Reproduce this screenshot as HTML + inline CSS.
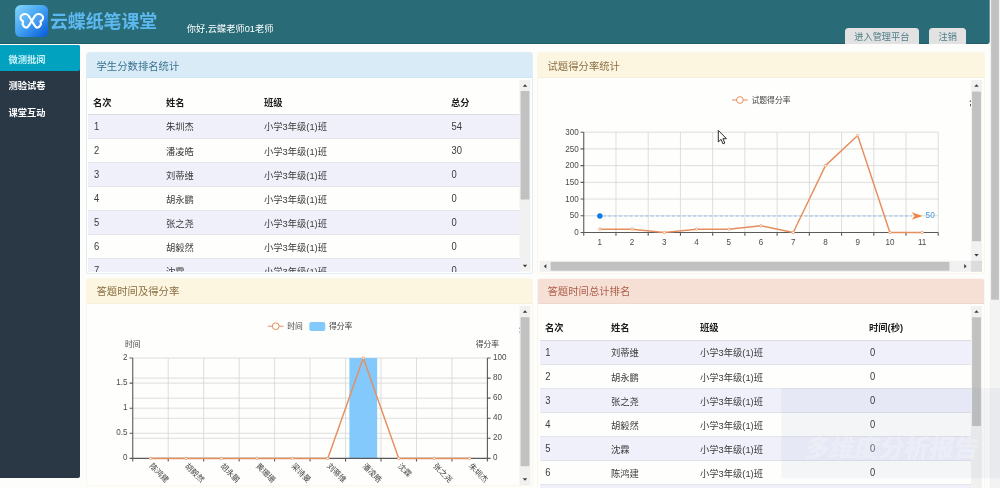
<!DOCTYPE html>
<html lang="zh-CN"><head><meta charset="utf-8"><title>云蝶纸笔课堂</title><style>
*{box-sizing:border-box}
html,body{margin:0;padding:0}
html{width:1000px;height:488px;overflow:hidden;background:#fdfdfc}
body{width:1000px;height:488px;overflow:hidden;position:relative;background:#fdfdfc;
 font-family:"Liberation Sans",sans-serif;font-size:9.3px;color:#3a3a3a}
.vh{position:absolute;width:1px;height:1px;overflow:hidden;clip:rect(0 0 0 0);clip-path:inset(50%);white-space:nowrap;font-size:1px}
.L{position:absolute;display:block;line-height:0;margin:0}
.L svg,.F svg{display:block;overflow:visible}
.F{display:block;line-height:0;position:relative}
.ov{position:absolute;left:0;top:0;pointer-events:none;font-family:"Liberation Sans",sans-serif}
.hd{position:absolute;left:0;top:0;width:990px;height:43.6px;background:#296c77;border-bottom:1.4px solid #225c66;border-bottom-right-radius:3.5px;margin:0}
.logo{position:absolute;left:12px;top:3px}
.btn{position:absolute;top:28.3px;height:16px;background:#e2e2e2;border-radius:3.5px 3.5px 0 0;border:0;padding:0;margin:0;display:block;font:inherit;overflow:visible}
.sb{position:absolute;left:0;top:44.6px;width:79.7px;height:433.7px;background:#2a3745;border-radius:0 2.5px 2px 0}
.sb .it{position:absolute;left:0;width:79.7px;height:26.7px;display:block}
.sb .act{background:#00a2bf;border-radius:0 2px 2px 0}
.pn{position:absolute;border:.8px solid #ddd;border-radius:2.6px;background:#fefefd;overflow:hidden;margin:0}
.ph{margin:0;height:25.3px;width:100%}
.info{border-color:#dcedf6}.info .ph{background:#d8ebf6;border-bottom:.7px solid #cfe6f1}
.warn{border-color:#fbf6e8}.warn .ph{background:#fcf6e1;border-bottom:.7px solid #f8efd9}
.danger{border-color:#fcf4f1}.danger .ph{background:#f6e0d6;border-bottom:.7px solid #f1d6d0}
.p4{border-bottom:0;border-bottom-left-radius:0;border-bottom-right-radius:0}
.soft,.L svg,.F svg,.n{filter:blur(.42px)}
.clip{position:absolute;overflow:hidden}
.tb{position:absolute;border-collapse:separate;border-spacing:0;table-layout:fixed;margin:0}
.tb th,.tb td{padding:0;text-align:left;vertical-align:middle;font-weight:normal}
.tb th{height:24.1px;border-bottom:1.3px solid #dcdce2}
.tb td{height:24.09px;border-bottom:.7px solid #e3e3ea}
.tb tbody tr:nth-child(odd) td{background:#f0f0fb}
.tb tbody tr:nth-child(even) td{background:#fefefc}
.n{display:block;line-height:12px;font-size:9.4px;color:#3a3a3a;transform:scaleY(1.17);transform-origin:0 55%;position:relative;top:.25px;left:.6px}
.t{font-family:"Liberation Sans","Noto Sans CJK SC",sans-serif}
.tbd{font-family:"Liberation Sans","Noto Sans CJK SC",sans-serif;font-weight:bold}
</style></head>
<body>
<section class="pn info" style="left:86px;top:52px;width:447px;height:222px"><h3 class="ph" style="height:25.4px"></h3></section><span class="L pt" style="left:95px;top:58px;width:87px;height:16px"><svg width="87" height="16" viewBox="0 0 87 16" aria-hidden="true"><text class="t" x="1.5" y="11.58" font-size="10.35" fill="#3b7391">学生分数排名统计</text></svg><span class="vh">学生分数排名统计</span></span><div class="clip" style="left:88px;top:80px;width:431.5px;height:191.5px"><table class="tb" style="left:0px;top:10.8px;width:431.5px"><colgroup><col style="width:73.3px"><col style="width:97.5px"><col style="width:186.9px"><col style="width:73.8px"></colgroup><thead><tr><th style="padding-left:5.4px"><span class="F"><svg width="20" height="12" viewBox="0 0 20 12" aria-hidden="true"><text class="tbd" x="0" y="10.05" font-size="9.3" fill="#1c1c1c">名次</text></svg><span class="vh">名次</span></span></th><th style="padding-left:5.2px"><span class="F"><svg width="20" height="12" viewBox="0 0 20 12" aria-hidden="true"><text class="tbd" x="0" y="10.05" font-size="9.3" fill="#1c1c1c">姓名</text></svg><span class="vh">姓名</span></span></th><th style="padding-left:5.2px"><span class="F"><svg width="20" height="12" viewBox="0 0 20 12" aria-hidden="true"><text class="tbd" x="0" y="10.05" font-size="9.3" fill="#1c1c1c">班级</text></svg><span class="vh">班级</span></span></th><th style="padding-left:5.2px"><span class="F"><svg width="20" height="12" viewBox="0 0 20 12" aria-hidden="true"><text class="tbd" x="0" y="10.05" font-size="9.3" fill="#1c1c1c">总分</text></svg><span class="vh">总分</span></span></th></tr></thead><tbody><tr><td style="padding-left:5.4px"><span class="n">1</span></td><td style="padding-left:5.2px"><span class="F"><svg width="29" height="12" viewBox="0 0 29 12" aria-hidden="true"><text class="t" x="0" y="10.05" font-size="9.3" fill="#3a3a3a">朱圳杰</text></svg><span class="vh">朱圳杰</span></span></td><td style="padding-left:5.2px"><span class="F"><svg width="65" height="12" viewBox="0 0 65 12" aria-hidden="true"><text class="t" x="0" y="10.05" font-size="9.3" fill="#3a3a3a">小学3年级(1)班</text></svg><span class="vh">小学3年级(1)班</span></span></td><td style="padding-left:5.2px"><span class="n">54</span></td></tr><tr><td style="padding-left:5.4px"><span class="n">2</span></td><td style="padding-left:5.2px"><span class="F"><svg width="29" height="12" viewBox="0 0 29 12" aria-hidden="true"><text class="t" x="0" y="10.05" font-size="9.3" fill="#3a3a3a">潘凌皓</text></svg><span class="vh">潘凌皓</span></span></td><td style="padding-left:5.2px"><span class="F"><svg width="65" height="12" viewBox="0 0 65 12" aria-hidden="true"><text class="t" x="0" y="10.05" font-size="9.3" fill="#3a3a3a">小学3年级(1)班</text></svg><span class="vh">小学3年级(1)班</span></span></td><td style="padding-left:5.2px"><span class="n">30</span></td></tr><tr><td style="padding-left:5.4px"><span class="n">3</span></td><td style="padding-left:5.2px"><span class="F"><svg width="29" height="12" viewBox="0 0 29 12" aria-hidden="true"><text class="t" x="0" y="10.05" font-size="9.3" fill="#3a3a3a">刘蒂维</text></svg><span class="vh">刘蒂维</span></span></td><td style="padding-left:5.2px"><span class="F"><svg width="65" height="12" viewBox="0 0 65 12" aria-hidden="true"><text class="t" x="0" y="10.05" font-size="9.3" fill="#3a3a3a">小学3年级(1)班</text></svg><span class="vh">小学3年级(1)班</span></span></td><td style="padding-left:5.2px"><span class="n">0</span></td></tr><tr><td style="padding-left:5.4px"><span class="n">4</span></td><td style="padding-left:5.2px"><span class="F"><svg width="29" height="12" viewBox="0 0 29 12" aria-hidden="true"><text class="t" x="0" y="10.05" font-size="9.3" fill="#3a3a3a">胡永鹏</text></svg><span class="vh">胡永鹏</span></span></td><td style="padding-left:5.2px"><span class="F"><svg width="65" height="12" viewBox="0 0 65 12" aria-hidden="true"><text class="t" x="0" y="10.05" font-size="9.3" fill="#3a3a3a">小学3年级(1)班</text></svg><span class="vh">小学3年级(1)班</span></span></td><td style="padding-left:5.2px"><span class="n">0</span></td></tr><tr><td style="padding-left:5.4px"><span class="n">5</span></td><td style="padding-left:5.2px"><span class="F"><svg width="29" height="12" viewBox="0 0 29 12" aria-hidden="true"><text class="t" x="0" y="10.05" font-size="9.3" fill="#3a3a3a">张之尧</text></svg><span class="vh">张之尧</span></span></td><td style="padding-left:5.2px"><span class="F"><svg width="65" height="12" viewBox="0 0 65 12" aria-hidden="true"><text class="t" x="0" y="10.05" font-size="9.3" fill="#3a3a3a">小学3年级(1)班</text></svg><span class="vh">小学3年级(1)班</span></span></td><td style="padding-left:5.2px"><span class="n">0</span></td></tr><tr><td style="padding-left:5.4px"><span class="n">6</span></td><td style="padding-left:5.2px"><span class="F"><svg width="29" height="12" viewBox="0 0 29 12" aria-hidden="true"><text class="t" x="0" y="10.05" font-size="9.3" fill="#3a3a3a">胡毅然</text></svg><span class="vh">胡毅然</span></span></td><td style="padding-left:5.2px"><span class="F"><svg width="65" height="12" viewBox="0 0 65 12" aria-hidden="true"><text class="t" x="0" y="10.05" font-size="9.3" fill="#3a3a3a">小学3年级(1)班</text></svg><span class="vh">小学3年级(1)班</span></span></td><td style="padding-left:5.2px"><span class="n">0</span></td></tr><tr><td style="padding-left:5.4px"><span class="n">7</span></td><td style="padding-left:5.2px"><span class="F"><svg width="20" height="12" viewBox="0 0 20 12" aria-hidden="true"><text class="t" x="0" y="10.05" font-size="9.3" fill="#3a3a3a">沈霖</text></svg><span class="vh">沈霖</span></span></td><td style="padding-left:5.2px"><span class="F"><svg width="65" height="12" viewBox="0 0 65 12" aria-hidden="true"><text class="t" x="0" y="10.05" font-size="9.3" fill="#3a3a3a">小学3年级(1)班</text></svg><span class="vh">小学3年级(1)班</span></span></td><td style="padding-left:5.2px"><span class="n">0</span></td></tr><tr><td style="padding-left:5.4px"><span class="n">8</span></td><td style="padding-left:5.2px"><span class="F"><svg width="29" height="12" viewBox="0 0 29 12" aria-hidden="true"><text class="t" x="0" y="10.05" font-size="9.3" fill="#3a3a3a">陈鸿建</text></svg><span class="vh">陈鸿建</span></span></td><td style="padding-left:5.2px"><span class="F"><svg width="65" height="12" viewBox="0 0 65 12" aria-hidden="true"><text class="t" x="0" y="10.05" font-size="9.3" fill="#3a3a3a">小学3年级(1)班</text></svg><span class="vh">小学3年级(1)班</span></span></td><td style="padding-left:5.2px"><span class="n">0</span></td></tr></tbody></table></div><svg class="ov" width="1000" height="488" viewBox="0 0 1000 488"><rect x="519.5" y="80" width="11" height="191.5" fill="#f1f1f1"/><rect x="520.6" y="91" width="8.8" height="108.5" fill="#c1c1c1"/><polygon points="522.75,86.84 527.25,86.84 525,84.36" fill="#3c3c3c"/><polygon points="522.75,264.66 527.25,264.66 525,267.14" fill="#3c3c3c"/></svg><section class="pn warn" style="left:537px;top:52px;width:447.5px;height:221.5px"><h3 class="ph" style="height:25.4px"></h3></section><span class="L pt" style="left:546px;top:58px;width:76px;height:16px"><svg width="76" height="16" viewBox="0 0 76 16" aria-hidden="true"><text class="t" x="1.5" y="11.58" font-size="10.35" fill="#8b6f43">试题得分率统计</text></svg><span class="vh">试题得分率统计</span></span><svg class="ov soft" width="1000" height="488" viewBox="0 0 1000 488" role="img" aria-label="试题得分率统计"><path d="M615.98 132.2V232.5M648.2 132.2V232.5M680.43 132.2V232.5M712.66 132.2V232.5M744.89 132.2V232.5M777.11 132.2V232.5M809.34 132.2V232.5M841.57 132.2V232.5M873.8 132.2V232.5M906.02 132.2V232.5M938.25 132.2V232.5M583.75 215.78H938.25M583.75 199.07H938.25M583.75 182.35H938.25M583.75 165.63H938.25M583.75 148.92H938.25M583.75 132.2H938.25" stroke="#d6d6d6" stroke-width=".8" fill="none"/><path d="M583.75 132.2V232.5M583.75 232.5H938.25M580.55 232.5H583.75M580.55 215.78H583.75M580.55 199.07H583.75M580.55 182.35H583.75M580.55 165.63H583.75M580.55 148.92H583.75M580.55 132.2H583.75M583.75 232.5V235.7M615.98 232.5V235.7M648.2 232.5V235.7M680.43 232.5V235.7M712.66 232.5V235.7M744.89 232.5V235.7M777.11 232.5V235.7M809.34 232.5V235.7M841.57 232.5V235.7M873.8 232.5V235.7M906.02 232.5V235.7M938.25 232.5V235.7" stroke="#5a5a5a" stroke-width="1.1" fill="none"/><text transform="translate(578.65 235.15) scale(1 1.2)" text-anchor="end" fill="#4a4a4a" font-size="8.1">0</text><text transform="translate(578.65 218.43) scale(1 1.2)" text-anchor="end" fill="#4a4a4a" font-size="8.1">50</text><text transform="translate(578.65 201.72) scale(1 1.2)" text-anchor="end" fill="#4a4a4a" font-size="8.1">100</text><text transform="translate(578.65 185) scale(1 1.2)" text-anchor="end" fill="#4a4a4a" font-size="8.1">150</text><text transform="translate(578.65 168.28) scale(1 1.2)" text-anchor="end" fill="#4a4a4a" font-size="8.1">200</text><text transform="translate(578.65 151.57) scale(1 1.2)" text-anchor="end" fill="#4a4a4a" font-size="8.1">250</text><text transform="translate(578.65 134.85) scale(1 1.2)" text-anchor="end" fill="#4a4a4a" font-size="8.1">300</text><text transform="translate(599.86 244.85) scale(1 1.2)" text-anchor="middle" fill="#4a4a4a" font-size="8.1">1</text><text transform="translate(632.09 244.85) scale(1 1.2)" text-anchor="middle" fill="#4a4a4a" font-size="8.1">2</text><text transform="translate(664.32 244.85) scale(1 1.2)" text-anchor="middle" fill="#4a4a4a" font-size="8.1">3</text><text transform="translate(696.55 244.85) scale(1 1.2)" text-anchor="middle" fill="#4a4a4a" font-size="8.1">4</text><text transform="translate(728.77 244.85) scale(1 1.2)" text-anchor="middle" fill="#4a4a4a" font-size="8.1">5</text><text transform="translate(761 244.85) scale(1 1.2)" text-anchor="middle" fill="#4a4a4a" font-size="8.1">6</text><text transform="translate(793.23 244.85) scale(1 1.2)" text-anchor="middle" fill="#4a4a4a" font-size="8.1">7</text><text transform="translate(825.45 244.85) scale(1 1.2)" text-anchor="middle" fill="#4a4a4a" font-size="8.1">8</text><text transform="translate(857.68 244.85) scale(1 1.2)" text-anchor="middle" fill="#4a4a4a" font-size="8.1">9</text><text transform="translate(889.91 244.85) scale(1 1.2)" text-anchor="middle" fill="#4a4a4a" font-size="8.1">10</text><text transform="translate(922.14 244.85) scale(1 1.2)" text-anchor="middle" fill="#4a4a4a" font-size="8.1">11</text><path d="M603 216H912" stroke="#8dbfee" stroke-width="1.15" stroke-dasharray="3.1 2.2" fill="none"/><circle cx="599.86" cy="216" r="2.7" fill="#0f7ae6"/><path d="M922.6 216L911.6 212.2L914.8 216L911.6 219.8Z" fill="#ef8648"/><text transform="translate(925.6 218.44) scale(1 1.2)" text-anchor="start" fill="#4b9be6" font-size="8.3">50</text><polyline points="599.86,229.16 632.09,229.16 664.32,232.5 696.55,229.16 728.77,229.16 761,225.81 793.23,232.5 825.45,165.63 857.68,135.54 889.91,232.5 922.14,232.5" fill="none" stroke="#e58f5f" stroke-width="1.45" stroke-linejoin="round"/><circle cx="599.86" cy="229.16" r="1.25" fill="#fff" stroke="#e58f5f" stroke-width=".7"/><circle cx="632.09" cy="229.16" r="1.25" fill="#fff" stroke="#e58f5f" stroke-width=".7"/><circle cx="664.32" cy="232.5" r="1.25" fill="#fff" stroke="#e58f5f" stroke-width=".7"/><circle cx="696.55" cy="229.16" r="1.25" fill="#fff" stroke="#e58f5f" stroke-width=".7"/><circle cx="728.77" cy="229.16" r="1.25" fill="#fff" stroke="#e58f5f" stroke-width=".7"/><circle cx="761" cy="225.81" r="1.25" fill="#fff" stroke="#e58f5f" stroke-width=".7"/><circle cx="793.23" cy="232.5" r="1.25" fill="#fff" stroke="#e58f5f" stroke-width=".7"/><circle cx="825.45" cy="165.63" r="1.25" fill="#fff" stroke="#e58f5f" stroke-width=".7"/><circle cx="857.68" cy="135.54" r="1.25" fill="#fff" stroke="#e58f5f" stroke-width=".7"/><circle cx="889.91" cy="232.5" r="1.25" fill="#fff" stroke="#e58f5f" stroke-width=".7"/><circle cx="922.14" cy="232.5" r="1.25" fill="#fff" stroke="#e58f5f" stroke-width=".7"/><path d="M732 100H747.8" stroke="#e58f5f" stroke-width="1"/><circle cx="739.9" cy="100" r="3.4" fill="#fdfdfc" stroke="#e58f5f" stroke-width="1"/><text class="t" x="751.4" y="102.73" font-size="7.85" fill="#444">试题得分率</text><path d="M970.3 100.4v1.6M970.6 104v2.2" stroke="#555" stroke-width="1.1"/><rect x="971" y="80" width="11" height="180.8" fill="#f1f1f1"/><rect x="972.1" y="91.6" width="8.8" height="149.6" fill="#c1c1c1"/><polygon points="974.25,86.84 978.75,86.84 976.5,84.36" fill="#3c3c3c"/><polygon points="974.25,253.96 978.75,253.96 976.5,256.44" fill="#3c3c3c"/><rect x="539.5" y="260.8" width="431.5" height="11" fill="#f1f1f1"/><rect x="550.6" y="261.9" width="398.8" height="8.8" fill="#c1c1c1"/><polygon points="546.34,264.05 546.34,268.55 543.86,266.3" fill="#3c3c3c"/><polygon points="964.16,264.05 964.16,268.55 966.64,266.3" fill="#3c3c3c"/><rect x="971" y="260.8" width="11" height="11" fill="#dcdcdc"/></svg><section class="pn warn" style="left:86px;top:277.6px;width:447px;height:208.6px"><h3 class="ph" style="height:25.4px"></h3></section><span class="L pt" style="left:95px;top:283px;width:87px;height:16px"><svg width="87" height="16" viewBox="0 0 87 16" aria-hidden="true"><text class="t" x="1.5" y="12.18" font-size="10.35" fill="#8b6f43">答题时间及得分率</text></svg><span class="vh">答题时间及得分率</span></span><svg class="ov soft" width="1000" height="488" viewBox="0 0 1000 488" role="img" aria-label="答题时间及得分率"><path d="M168.22 358V458.4M203.68 358V458.4M239.14 358V458.4M274.61 358V458.4M310.07 358V458.4M345.54 358V458.4M381 358V458.4M416.47 358V458.4M451.93 358V458.4M132.75 433.3H487.4M132.75 408.2H487.4M132.75 383.1H487.4M132.75 358H487.4M132.75 438.32H487.4M132.75 418.24H487.4M132.75 398.16H487.4M132.75 378.08H487.4" stroke="#d6d6d6" stroke-width=".8" fill="none"/><rect x="349.37" y="358" width="27.8" height="100.4" fill="#83c9fb"/><path d="M132.75 358V458.4M132.75 458.4H487.4M487.4 358V458.4M129.55 458.4H132.75M129.55 433.3H132.75M129.55 408.2H132.75M129.55 383.1H132.75M129.55 358H132.75M487.4 458.4H490.6M487.4 438.32H490.6M487.4 418.24H490.6M487.4 398.16H490.6M487.4 378.08H490.6M487.4 358H490.6M132.75 458.4V461.6M168.22 458.4V461.6M203.68 458.4V461.6M239.14 458.4V461.6M274.61 458.4V461.6M310.07 458.4V461.6M345.54 458.4V461.6M381 458.4V461.6M416.47 458.4V461.6M451.93 458.4V461.6M487.4 458.4V461.6" stroke="#5a5a5a" stroke-width="1.1" fill="none"/><text transform="translate(127.55 460.35) scale(1 1.2)" text-anchor="end" fill="#4a4a4a" font-size="8.1">0</text><text transform="translate(127.55 435.25) scale(1 1.2)" text-anchor="end" fill="#4a4a4a" font-size="8.1">0.5</text><text transform="translate(127.55 410.15) scale(1 1.2)" text-anchor="end" fill="#4a4a4a" font-size="8.1">1</text><text transform="translate(127.55 385.05) scale(1 1.2)" text-anchor="end" fill="#4a4a4a" font-size="8.1">1.5</text><text transform="translate(127.55 359.95) scale(1 1.2)" text-anchor="end" fill="#4a4a4a" font-size="8.1">2</text><text transform="translate(493 460.35) scale(1 1.2)" text-anchor="start" fill="#4a4a4a" font-size="8.1">0</text><text transform="translate(493 440.27) scale(1 1.2)" text-anchor="start" fill="#4a4a4a" font-size="8.1">20</text><text transform="translate(493 420.19) scale(1 1.2)" text-anchor="start" fill="#4a4a4a" font-size="8.1">40</text><text transform="translate(493 400.11) scale(1 1.2)" text-anchor="start" fill="#4a4a4a" font-size="8.1">60</text><text transform="translate(493 380.03) scale(1 1.2)" text-anchor="start" fill="#4a4a4a" font-size="8.1">80</text><text transform="translate(493 359.95) scale(1 1.2)" text-anchor="start" fill="#4a4a4a" font-size="8.1">100</text><text class="t" x="124.95" y="346.61" font-size="7.8" fill="#444">时间</text><text class="t" x="475.7" y="346.61" font-size="7.8" fill="#444">得分率</text><polyline points="150.48,458.4 185.95,458.4 221.41,458.4 256.88,458.4 292.34,458.4 327.81,458.4 363.27,358 398.74,458.4 434.2,458.4 469.67,458.4" fill="none" stroke="#e58f5f" stroke-width="1.45" stroke-linejoin="round"/><circle cx="150.48" cy="458.4" r="1.25" fill="#fff" stroke="#e58f5f" stroke-width=".7"/><circle cx="185.95" cy="458.4" r="1.25" fill="#fff" stroke="#e58f5f" stroke-width=".7"/><circle cx="221.41" cy="458.4" r="1.25" fill="#fff" stroke="#e58f5f" stroke-width=".7"/><circle cx="256.88" cy="458.4" r="1.25" fill="#fff" stroke="#e58f5f" stroke-width=".7"/><circle cx="292.34" cy="458.4" r="1.25" fill="#fff" stroke="#e58f5f" stroke-width=".7"/><circle cx="327.81" cy="458.4" r="1.25" fill="#fff" stroke="#e58f5f" stroke-width=".7"/><circle cx="363.27" cy="358" r="1.25" fill="#fff" stroke="#e58f5f" stroke-width=".7"/><circle cx="398.74" cy="458.4" r="1.25" fill="#fff" stroke="#e58f5f" stroke-width=".7"/><circle cx="434.2" cy="458.4" r="1.25" fill="#fff" stroke="#e58f5f" stroke-width=".7"/><circle cx="469.67" cy="458.4" r="1.25" fill="#fff" stroke="#e58f5f" stroke-width=".7"/><text class="t" transform="rotate(45 151.08 464.6)" x="151.08" y="467.41" font-size="7.8" fill="#444">陈鸿建</text><text class="t" transform="rotate(45 186.55 464.6)" x="186.55" y="467.41" font-size="7.8" fill="#444">胡毅然</text><text class="t" transform="rotate(45 222.01 464.6)" x="222.01" y="467.41" font-size="7.8" fill="#444">胡永鹏</text><text class="t" transform="rotate(45 257.48 464.6)" x="257.48" y="467.41" font-size="7.8" fill="#444">黄珊珊</text><text class="t" transform="rotate(45 292.94 464.6)" x="292.94" y="467.41" font-size="7.8" fill="#444">梁诗曼</text><text class="t" transform="rotate(45 328.41 464.6)" x="328.41" y="467.41" font-size="7.8" fill="#444">刘蒂维</text><text class="t" transform="rotate(45 363.87 464.6)" x="363.87" y="467.41" font-size="7.8" fill="#444">潘凌皓</text><text class="t" transform="rotate(45 399.34 464.6)" x="399.34" y="467.41" font-size="7.8" fill="#444">沈霖</text><text class="t" transform="rotate(45 434.8 464.6)" x="434.8" y="467.41" font-size="7.8" fill="#444">张之尧</text><text class="t" transform="rotate(45 470.27 464.6)" x="470.27" y="467.41" font-size="7.8" fill="#444">朱圳杰</text><path d="M267.8 326.2H283.6" stroke="#e58f5f" stroke-width="1"/><circle cx="275.7" cy="326.2" r="3.4" fill="#fdfdfc" stroke="#e58f5f" stroke-width="1"/><text class="t" x="287.2" y="329.01" font-size="7.8" fill="#444">时间</text><rect x="309.3" y="321.9" width="16" height="9.1" rx="2" fill="#83c9fb"/><text class="t" x="329" y="329.01" font-size="7.8" fill="#444">得分率</text><path d="M519.7 327.4v1.6M520 331v2.2" stroke="#555" stroke-width="1.1"/><rect x="519.5" y="306" width="11" height="179" fill="#f1f1f1"/><rect x="520.6" y="317.2" width="8.8" height="149" fill="#c1c1c1"/><polygon points="522.75,312.84 527.25,312.84 525,310.36" fill="#3c3c3c"/><polygon points="522.75,478.16 527.25,478.16 525,480.64" fill="#3c3c3c"/></svg><section class="pn danger p4" style="left:537px;top:277.6px;width:447.5px;height:210.4px"><h3 class="ph" style="height:25.4px"></h3></section><span class="L pt" style="left:546px;top:283px;width:87px;height:16px"><svg width="87" height="16" viewBox="0 0 87 16" aria-hidden="true"><text class="t" x="1.5" y="12.18" font-size="10.35" fill="#ad5f4b">答题时间总计排名</text></svg><span class="vh">答题时间总计排名</span></span><div class="clip" style="left:539.5px;top:306px;width:431.5px;height:182px"><table class="tb" style="left:0px;top:10.8px;width:431.5px"><colgroup><col style="width:66.5px"><col style="width:88.9px"><col style="width:169.4px"><col style="width:106.7px"></colgroup><thead><tr><th style="padding-left:5.2px"><span class="F"><svg width="20" height="12" viewBox="0 0 20 12" aria-hidden="true"><text class="tbd" x="0" y="9.45" font-size="9.3" fill="#1c1c1c">名次</text></svg><span class="vh">名次</span></span></th><th style="padding-left:5.2px"><span class="F"><svg width="20" height="12" viewBox="0 0 20 12" aria-hidden="true"><text class="tbd" x="0" y="9.45" font-size="9.3" fill="#1c1c1c">姓名</text></svg><span class="vh">姓名</span></span></th><th style="padding-left:5.2px"><span class="F"><svg width="20" height="12" viewBox="0 0 20 12" aria-hidden="true"><text class="tbd" x="0" y="9.45" font-size="9.3" fill="#1c1c1c">班级</text></svg><span class="vh">班级</span></span></th><th style="padding-left:5.2px"><span class="F"><svg width="36" height="12" viewBox="0 0 36 12" aria-hidden="true"><text class="tbd" x="0" y="9.45" font-size="9.3" fill="#1c1c1c">时间(秒)</text></svg><span class="vh">时间(秒)</span></span></th></tr></thead><tbody><tr><td style="padding-left:5.2px"><span class="n">1</span></td><td style="padding-left:5.2px"><span class="F"><svg width="29" height="12" viewBox="0 0 29 12" aria-hidden="true"><text class="t" x="0" y="9.85" font-size="9.3" fill="#3a3a3a">刘蒂维</text></svg><span class="vh">刘蒂维</span></span></td><td style="padding-left:5.2px"><span class="F"><svg width="65" height="12" viewBox="0 0 65 12" aria-hidden="true"><text class="t" x="0" y="9.85" font-size="9.3" fill="#3a3a3a">小学3年级(1)班</text></svg><span class="vh">小学3年级(1)班</span></span></td><td style="padding-left:5.2px"><span class="n">0</span></td></tr><tr><td style="padding-left:5.2px"><span class="n">2</span></td><td style="padding-left:5.2px"><span class="F"><svg width="29" height="12" viewBox="0 0 29 12" aria-hidden="true"><text class="t" x="0" y="9.85" font-size="9.3" fill="#3a3a3a">胡永鹏</text></svg><span class="vh">胡永鹏</span></span></td><td style="padding-left:5.2px"><span class="F"><svg width="65" height="12" viewBox="0 0 65 12" aria-hidden="true"><text class="t" x="0" y="9.85" font-size="9.3" fill="#3a3a3a">小学3年级(1)班</text></svg><span class="vh">小学3年级(1)班</span></span></td><td style="padding-left:5.2px"><span class="n">0</span></td></tr><tr><td style="padding-left:5.2px"><span class="n">3</span></td><td style="padding-left:5.2px"><span class="F"><svg width="29" height="12" viewBox="0 0 29 12" aria-hidden="true"><text class="t" x="0" y="9.85" font-size="9.3" fill="#3a3a3a">张之尧</text></svg><span class="vh">张之尧</span></span></td><td style="padding-left:5.2px"><span class="F"><svg width="65" height="12" viewBox="0 0 65 12" aria-hidden="true"><text class="t" x="0" y="9.85" font-size="9.3" fill="#3a3a3a">小学3年级(1)班</text></svg><span class="vh">小学3年级(1)班</span></span></td><td style="padding-left:5.2px"><span class="n">0</span></td></tr><tr><td style="padding-left:5.2px"><span class="n">4</span></td><td style="padding-left:5.2px"><span class="F"><svg width="29" height="12" viewBox="0 0 29 12" aria-hidden="true"><text class="t" x="0" y="9.85" font-size="9.3" fill="#3a3a3a">胡毅然</text></svg><span class="vh">胡毅然</span></span></td><td style="padding-left:5.2px"><span class="F"><svg width="65" height="12" viewBox="0 0 65 12" aria-hidden="true"><text class="t" x="0" y="9.85" font-size="9.3" fill="#3a3a3a">小学3年级(1)班</text></svg><span class="vh">小学3年级(1)班</span></span></td><td style="padding-left:5.2px"><span class="n">0</span></td></tr><tr><td style="padding-left:5.2px"><span class="n">5</span></td><td style="padding-left:5.2px"><span class="F"><svg width="20" height="12" viewBox="0 0 20 12" aria-hidden="true"><text class="t" x="0" y="9.85" font-size="9.3" fill="#3a3a3a">沈霖</text></svg><span class="vh">沈霖</span></span></td><td style="padding-left:5.2px"><span class="F"><svg width="65" height="12" viewBox="0 0 65 12" aria-hidden="true"><text class="t" x="0" y="9.85" font-size="9.3" fill="#3a3a3a">小学3年级(1)班</text></svg><span class="vh">小学3年级(1)班</span></span></td><td style="padding-left:5.2px"><span class="n">0</span></td></tr><tr><td style="padding-left:5.2px"><span class="n">6</span></td><td style="padding-left:5.2px"><span class="F"><svg width="29" height="12" viewBox="0 0 29 12" aria-hidden="true"><text class="t" x="0" y="9.85" font-size="9.3" fill="#3a3a3a">陈鸿建</text></svg><span class="vh">陈鸿建</span></span></td><td style="padding-left:5.2px"><span class="F"><svg width="65" height="12" viewBox="0 0 65 12" aria-hidden="true"><text class="t" x="0" y="9.85" font-size="9.3" fill="#3a3a3a">小学3年级(1)班</text></svg><span class="vh">小学3年级(1)班</span></span></td><td style="padding-left:5.2px"><span class="n">0</span></td></tr><tr><td style="padding-left:5.2px"><span class="n">7</span></td><td style="padding-left:5.2px"><span class="F"><svg width="29" height="12" viewBox="0 0 29 12" aria-hidden="true"><text class="t" x="0" y="9.85" font-size="9.3" fill="#3a3a3a">黄珊珊</text></svg><span class="vh">黄珊珊</span></span></td><td style="padding-left:5.2px"><span class="F"><svg width="65" height="12" viewBox="0 0 65 12" aria-hidden="true"><text class="t" x="0" y="9.85" font-size="9.3" fill="#3a3a3a">小学3年级(1)班</text></svg><span class="vh">小学3年级(1)班</span></span></td><td style="padding-left:5.2px"><span class="n">0</span></td></tr></tbody></table></div><svg class="ov" width="1000" height="488" viewBox="0 0 1000 488"><rect x="971" y="306" width="11" height="191" fill="#f1f1f1"/><rect x="972.1" y="317.3" width="8.8" height="108.7" fill="#c1c1c1"/><polygon points="974.25,312.84 978.75,312.84 976.5,310.36" fill="#3c3c3c"/><polygon points="974.25,490.16 978.75,490.16 976.5,492.64" fill="#3c3c3c"/></svg><nav class="sb"><a class="it act" style="top:0"><span class="L " style="left:7px;top:8px;width:41px;height:14px"><svg width="41" height="14" viewBox="0 0 41 14" aria-hidden="true"><text class="tbd" x="1.6" y="10.03" font-size="9.25" fill="#c9f1f9">微测批阅</text></svg><span class="vh">微测批阅</span></span></a><a class="it" style="top:26.7px"><span class="L " style="left:7px;top:8px;width:41px;height:14px"><svg width="41" height="14" viewBox="0 0 41 14" aria-hidden="true"><text class="tbd" x="1.6" y="10.03" font-size="9.25" fill="#ffffff">测验试卷</text></svg><span class="vh">测验试卷</span></span></a><a class="it" style="top:53.4px"><span class="L " style="left:7px;top:8px;width:41px;height:14px"><svg width="41" height="14" viewBox="0 0 41 14" aria-hidden="true"><text class="tbd" x="1.6" y="10.33" font-size="9.25" fill="#ffffff">课堂互动</text></svg><span class="vh">课堂互动</span></span></a></nav><header class="hd"><svg class="logo" width="36" height="36" viewBox="12 3 36 36" role="img" aria-label="logo"><defs><linearGradient id="lg" x1="0" y1="0" x2="1" y2="1"><stop offset="0" stop-color="#86d6fc"/><stop offset=".45" stop-color="#46a6f3"/><stop offset="1" stop-color="#0558d8"/></linearGradient></defs><rect x="15.1" y="5.1" width="33" height="32" rx="5.5" fill="url(#lg)"/><g transform="translate(12 2) scale(.07782) translate(254 243) scale(.93) translate(-256 -245)" fill="#fff" fill-opacity=".08" stroke="#fff" stroke-width="29" stroke-linejoin="round" stroke-linecap="round"><path d="M256 245 L212 174 C194 146 140 138 110 172 C88 200 102 238 136 251 C118 290 142 340 184 338 C202 337 210 322 218 306 L256 245 L300 174 C318 146 372 138 402 172 C424 200 410 238 376 251 C394 290 370 340 328 338 C310 337 302 322 294 306 Z"/></g></svg><span class="L h1" style="left:48px;top:8px;width:112px;height:27px"><svg width="112" height="27" viewBox="0 0 112 27" aria-hidden="true"><text class="tbd" x="1.9" y="20.04" font-size="17.9" fill="#5cb8ef">云蝶纸笔课堂</text></svg><span class="vh">云蝶纸笔课堂</span></span><span class="L " style="left:185px;top:21px;width:91px;height:14px"><svg width="91" height="14" viewBox="0 0 91 14" aria-hidden="true"><text class="t" x="1.8" y="10.52" font-size="9.22" fill="#ffffff">你好,云蝶老师01老师</text></svg><span class="vh">你好,云蝶老师01老师</span></span><button type="button" class="btn" style="left:844.5px;width:74px"><span class="L " style="left:8px;top:2px;width:59px;height:14px"><svg width="59" height="14" viewBox="0 0 59 14" aria-hidden="true"><text class="t" x="1.3" y="10.21" font-size="9.2" fill="#4e7d87">进入管理平台</text></svg><span class="vh">进入管理平台</span></span></button><button type="button" class="btn" style="left:928.6px;width:37.6px"><span class="L " style="left:8px;top:2px;width:23px;height:14px"><svg width="23" height="14" viewBox="0 0 23 14" aria-hidden="true"><text class="t" x="1.6" y="10.21" font-size="9.2" fill="#4e7d87">注销</text></svg><span class="vh">注销</span></span></button></header><svg class="ov" width="1000" height="488" viewBox="0 0 1000 488" aria-hidden="true"><rect x="989.7" y="0" width="10.3" height="488" fill="#f3f3f3"/><rect x="991.1" y="0" width="7.8" height="299.7" fill="#c1c1c1"/><rect x="781.3" y="388" width="218.7" height="90.5" fill="#5a78a0" opacity=".065"/><text class="tbd" transform="translate(804 457.43) skewX(-10)" x="0" y="0" font-size="24.8" fill="#ffffff" opacity=".26">多维度分析报告</text><path transform="translate(718.3 130.4) scale(.68)" d="M0 0V17L4 13.2L6.9 19.8L9.6 18.6L6.8 12.2H12Z" fill="#fff" stroke="#222" stroke-width="1.4" stroke-linejoin="round"/></svg>
</body></html>
